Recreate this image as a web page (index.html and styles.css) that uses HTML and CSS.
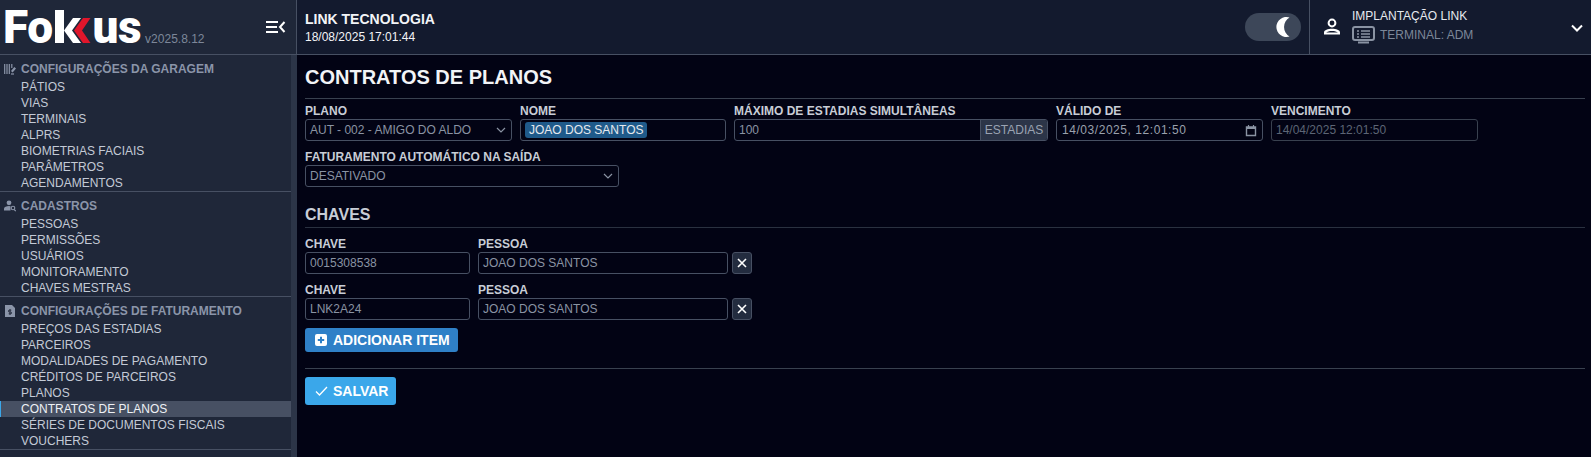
FILE: index.html
```html
<!DOCTYPE html>
<html lang="pt-BR">
<head>
<meta charset="utf-8">
<title>Contratos de Planos</title>
<link rel="stylesheet" href="styles.css">
</head>
<body>
<div class="app">
  <header class="topbar">
    <div class="brand">
      <div class="logo">
        <span class="logo-text">Fo</span>
        <svg class="logo-chev" width="36" height="33" viewBox="0 0 36 33"><path d="M0 0H9V33H0Z" fill="#fff"/><path d="M9 20.5 L18 8 H26 L17 20.5 L26 33 H18 Z" fill="#fff"/><path d="M19 20.5 L28 8 H35.5 L27 20.5 L35.5 33 H28 Z" fill="#e0162b"/></svg>
        <span class="logo-text">us</span>
      </div>
      <span class="version">v2025.8.12</span>
      <svg class="menu-toggle" width="20" height="14" viewBox="0 0 20 14"><path d="M0 2H12M0 7H11M0 12H12" stroke="#fff" stroke-width="1.8" fill="none"/><path d="M18.5 2 L14 7 L18.5 12" stroke="#fff" stroke-width="2" fill="none"/></svg>
    </div>
    <div class="company">
      <div class="company-name">LINK TECNOLOGIA</div>
      <div class="clock">18/08/2025 17:01:44</div>
    </div>
    <div class="theme-toggle">
      <svg width="14" height="20" viewBox="0 0 14 20"><path d="M13.5 0.5 A10 10 0 1 0 13.5 19.5 A11 11 0 0 1 13.5 0.5 Z" fill="#fff"/></svg>
    </div>
    <div class="user">
      <svg class="user-icon" width="20" height="20" viewBox="0 0 20 20"><circle cx="10" cy="6" r="3.4" fill="none" stroke="#fff" stroke-width="2"/><path d="M2 17.5 V15.5 C2 13 6 11.8 10 11.8 C14 11.8 18 13 18 15.5 V17.5 Z" fill="#fff"/><path d="M4.2 15.4 C5 14.6 7.5 13.9 10 13.9 C12.5 13.9 15 14.6 15.8 15.4 Z" fill="#131a2e"/></svg>
      <div class="user-info">
        <div class="user-name">IMPLANTAÇÃO LINK</div>
        <div class="terminal">
          <svg width="23" height="18" viewBox="0 0 23 18"><rect x="1" y="1" width="21" height="13" rx="2" fill="none" stroke="#8a93a3" stroke-width="2"/><path d="M5 5H7M9 5H18M5 8H7M9 8H18M5 11H7M9 11H18" stroke="#8a93a3" stroke-width="1.4"/><path d="M6 16.5H17" stroke="#8a93a3" stroke-width="2"/></svg>
          <span>TERMINAL: ADM</span>
        </div>
      </div>
      <svg class="user-chev" width="12" height="8" viewBox="0 0 12 8"><path d="M1 1.5 L6 6.5 L11 1.5" stroke="#fff" stroke-width="2" fill="none"/></svg>
    </div>
  </header>
  <div class="body">
    <nav class="sidebar">
      <div class="nav-scroll">
        <section class="nav-group">
          <h3 class="nav-head"><svg width="12" height="12" viewBox="0 0 12 12"><path d="M.7 1V11M3 1V11M5.3 1V11" stroke="#8b95a9" stroke-width="1.2"/><path d="M7.8 1V5" stroke="#8b95a9" stroke-width="1.2"/><path d="M7 8L10.3 4L12 5.6L8.6 9.6Z" fill="#8b95a9"/><path d="M7 11H10" stroke="#8b95a9" stroke-width="1.2"/></svg>CONFIGURAÇÕES DA GARAGEM</h3>
          <a class="nav-item">PÁTIOS</a>
          <a class="nav-item">VIAS</a>
          <a class="nav-item">TERMINAIS</a>
          <a class="nav-item">ALPRS</a>
          <a class="nav-item">BIOMETRIAS FACIAIS</a>
          <a class="nav-item">PARÂMETROS</a>
          <a class="nav-item">AGENDAMENTOS</a>
        </section>
        <section class="nav-group">
          <h3 class="nav-head"><svg width="12" height="12" viewBox="0 0 12 12"><circle cx="5" cy="2.8" r="2.4" fill="#8b95a9"/><path d="M0 10.5V8.5C0 7 2.5 6 5 6L6.5 6.3V10.5Z" fill="#8b95a9"/><circle cx="9" cy="8" r="1.8" fill="none" stroke="#8b95a9" stroke-width="1.1"/><path d="M10.2 9.5L11.8 11.2" stroke="#8b95a9" stroke-width="1.1"/></svg>CADASTROS</h3>
          <a class="nav-item">PESSOAS</a>
          <a class="nav-item">PERMISSÕES</a>
          <a class="nav-item">USUÁRIOS</a>
          <a class="nav-item">MONITORAMENTO</a>
          <a class="nav-item">CHAVES MESTRAS</a>
        </section>
        <section class="nav-group">
          <h3 class="nav-head"><svg width="12" height="14" viewBox="0 0 12 14"><path d="M1 1H8L11 4V13H1Z" fill="#8b95a9"/><path d="M6 5V11M4.7 9.8H7C7.8 9.8 7.8 8 7 8H5C4.2 8 4.2 6.2 5 6.2H7.3" stroke="#1f2739" stroke-width=".9" fill="none"/></svg>CONFIGURAÇÕES DE FATURAMENTO</h3>
          <a class="nav-item">PREÇOS DAS ESTADIAS</a>
          <a class="nav-item">PARCEIROS</a>
          <a class="nav-item">MODALIDADES DE PAGAMENTO</a>
          <a class="nav-item">CRÉDITOS DE PARCEIROS</a>
          <a class="nav-item">PLANOS</a>
          <a class="nav-item active">CONTRATOS DE PLANOS</a>
          <a class="nav-item">SÉRIES DE DOCUMENTOS FISCAIS</a>
          <a class="nav-item">VOUCHERS</a>
        </section>
      </div>
      <div class="scrollbar"></div>
    </nav>
    <main class="content">
      <h1 class="page-title">CONTRATOS DE PLANOS</h1>
      <div class="form-row">
        <label class="field w-plano"><span class="lbl">PLANO</span>
          <span class="ctl select">AUT - 002 - AMIGO DO ALDO<svg width="10" height="6" viewBox="0 0 10 6"><path d="M1 1L5 5L9 1" stroke="#8a93a3" stroke-width="1.2" fill="none"/></svg></span></label>
        <label class="field w-nome"><span class="lbl">NOME</span>
          <span class="ctl"><mark class="tag">JOAO DOS SANTOS</mark></span></label>
        <label class="field w-max"><span class="lbl">MÁXIMO DE ESTADIAS SIMULTÂNEAS</span>
          <span class="ctl group"><span class="group-val">100</span><span class="addon">ESTADIAS</span></span></label>
        <label class="field w-date"><span class="lbl">VÁLIDO DE</span>
          <span class="ctl select dt">14/03/2025, 12:01:50<svg width="12" height="13" viewBox="0 0 12 13"><path d="M1.5 3H10.5V11.5H1.5Z" fill="none" stroke="#8a93a3" stroke-width="1.4"/><path d="M1.5 3H10.5V5H1.5Z" fill="#8a93a3"/><path d="M3.5 1V3M8.5 1V3" stroke="#8a93a3" stroke-width="1.2"/></svg></span></label>
        <label class="field w-date"><span class="lbl">VENCIMENTO</span>
          <span class="ctl disabled">14/04/2025 12:01:50</span></label>
      </div>
      <div class="form-row">
        <label class="field w-fat"><span class="lbl">FATURAMENTO AUTOMÁTICO NA SAÍDA</span>
          <span class="ctl select">DESATIVADO<svg width="10" height="6" viewBox="0 0 10 6"><path d="M1 1L5 5L9 1" stroke="#8a93a3" stroke-width="1.2" fill="none"/></svg></span></label>
      </div>
      <h2 class="sub-title">CHAVES</h2>
      <div class="key-row">
        <label class="field w-chave"><span class="lbl">CHAVE</span><span class="ctl">0015308538</span></label>
        <label class="field w-pessoa"><span class="lbl">PESSOA</span><span class="ctl">JOAO DOS SANTOS</span></label>
        <button class="remove" type="button"><svg width="10" height="10" viewBox="0 0 10 10"><path d="M1 1L9 9M9 1L1 9" stroke="#fff" stroke-width="1.6"/></svg></button>
      </div>
      <div class="key-row">
        <label class="field w-chave"><span class="lbl">CHAVE</span><span class="ctl">LNK2A24</span></label>
        <label class="field w-pessoa"><span class="lbl">PESSOA</span><span class="ctl">JOAO DOS SANTOS</span></label>
        <button class="remove" type="button"><svg width="10" height="10" viewBox="0 0 10 10"><path d="M1 1L9 9M9 1L1 9" stroke="#fff" stroke-width="1.6"/></svg></button>
      </div>
      <button class="btn btn-add" type="button"><svg width="12" height="12" viewBox="0 0 12 12"><rect width="12" height="12" rx="2" fill="#fff"/><path d="M6 2.8V9.2M2.8 6H9.2" stroke="#2f80c7" stroke-width="2"/></svg>ADICIONAR ITEM</button>
      <hr class="divider">
      <button class="btn btn-save" type="button"><svg width="13" height="10" viewBox="0 0 13 10"><path d="M1 5.5L4.5 9L12 1" stroke="#fff" stroke-width="1.3" fill="none"/></svg>SALVAR</button>
    </main>
  </div>
</div>
</body>
</html>
```

FILE: styles.css
```css
* { box-sizing: border-box; }
html, body { margin: 0; height: 100%; overflow: hidden; }
body { font-family: "Liberation Sans", Arial, sans-serif; font-size: 12px; background: #020314; color: #aeb4bf; }
.app { display: flex; flex-direction: column; height: 457px; }

.topbar { display: flex; height: 55px; background: #131a2e; border-bottom: 1px solid #475063; flex: none; }
.brand { width: 297px; flex: none; display: flex; align-items: flex-end; background: #1f2739; border-right: 1px solid #475063; position: relative; padding: 0 0 10px 3px; }
.logo { display: flex; align-items: flex-end; height: 33px; }
.logo-text { font-family: Roboto, sans-serif; font-weight: 900; font-size: 46px; line-height: 33px; height: 33px; color: #fff; letter-spacing: -.5px; }
.logo-chev { margin: 0 2px 0 2px; flex: none; position: relative; top: -1px; }
.version { font-size: 12px; color: #7d8799; margin: 0 0 -2px 4px; line-height: 14px; }
.menu-toggle { position: absolute; left: 266px; top: 20px; }
.company { flex: 1; padding: 11px 0 0 8px; }
.company-name { font-size: 14px; font-weight: 700; color: #f2f4f7; line-height: 17px; }
.clock { font-size: 12px; color: #f2f4f7; line-height: 14px; margin-top: 2px; }
.theme-toggle { width: 56px; height: 28px; border-radius: 14px; background: #3d4759; margin: 13px 8px 0 0; display: flex; align-items: center; justify-content: flex-end; padding-right: 11px; flex: none; }
.user { width: 282px; flex: none; border-left: 1px solid #475063; display: flex; align-items: center; padding: 0 0 0 12px; position: relative; }
.user-icon { flex: none; margin-right: 10px; }
.user-info { padding-top: 1px; }
.user-name { font-size: 12px; color: #e6e9ee; line-height: 14px; margin-top: -3px; }
.terminal { display: flex; align-items: center; gap: 5px; color: #7d8799; font-size: 12px; margin-top: 3px; }
.user-chev { position: absolute; right: 8px; top: 24px; }

.body { display: flex; flex: 1; min-height: 0; }
.sidebar { width: 297px; flex: none; display: flex; background: #1f2739; overflow: hidden; }
.nav-scroll { width: 291px; flex: none; }
.scrollbar { width: 6px; background: #2c3548; }
.nav-group { border-bottom: 1px solid #475063; padding: 6px 0 0; }
.nav-head { display: flex; align-items: center; margin: 0 0 2px; font-size: 12px; font-weight: 700; line-height: 16px; color: #8b95a9; }
.nav-head svg { margin: 0 5px 0 4px; flex: none; }
.nav-item { display: block; padding-left: 21px; line-height: 16px; height: 16px; font-size: 12px; color: #c3cad6; }
.nav-item.active { background: #475063; color: #eef1f5; box-shadow: inset 1px 0 0 #3aa7ea; }

.content { flex: 1; padding: 0 6px 0 8px; min-width: 0; }
.page-title { margin: 10px 0 0; font-size: 20px; line-height: 24px; font-weight: 700; color: #f2f4f7; padding-bottom: 9px; border-bottom: 1px solid #39414f; }
.form-row { display: flex; gap: 8px; margin-top: 5px; }
.form-row + .form-row { margin-top: 9px; }
.field { display: flex; flex-direction: column; }
.lbl { font-size: 12px; font-weight: 700; line-height: 14px; color: #c8cdd6; margin-bottom: 1px; }
.ctl { display: flex; align-items: center; justify-content: space-between; height: 22px; border: 1px solid #475063; border-radius: 3px; padding: 0 4px; font-size: 12px; color: #8a93a3; background: #020314; white-space: nowrap; }
.select svg { flex: none; margin-right: 1px; }
.w-plano { width: 207px; }
.w-nome { width: 206px; }
.w-max { width: 314px; }
.w-date { width: 207px; }
.w-fat { width: 314px; }
.tag { background: #1f5a8a; color: #e6e9ee; border-radius: 3px; padding: 1px 4px; line-height: 14px; }
.group { padding: 0 0 0 4px; overflow: hidden; }
.addon { display: flex; align-items: center; justify-content: center; height: 100%; width: 67px; flex: none; background: #2c3548; border-left: 1px solid #475063; color: #9aa3b2; font-size: 12px; }
.dt { color: #9aa1ad; padding-left: 5px; letter-spacing: .55px; }
.disabled { color: #5c6575; border-color: #39414f; }
.sub-title { margin: 19px 0 0; font-size: 16px; line-height: 18px; font-weight: 700; color: #c8cdd6; padding-bottom: 3px; border-bottom: 1px solid #2a3140; }
.key-row { display: flex; align-items: flex-end; gap: 8px; margin-top: 9px; }
.w-chave { width: 165px; }
.w-pessoa { width: 250px; margin-right: -4px; }
.remove { width: 20px; height: 22px; padding: 0; border: 1px solid #475063; border-radius: 3px; background: #232c3f; display: flex; align-items: center; justify-content: center; }
.btn { display: flex; align-items: center; border: 0; border-radius: 3px; color: #fff; font-family: inherit; font-weight: 700; }
.btn-add { margin-top: 8px; height: 24px; width: 153px; padding: 0 0 0 10px; gap: 6px; font-size: 14px; background: #2f80c7; }
.divider { margin: 16px 0 8px; border: 0; border-top: 1px solid #39414f; }
.btn-save { height: 28px; width: 91px; padding: 0 0 0 10px; gap: 5px; font-size: 14px; background: #3aa7ea; }
```
